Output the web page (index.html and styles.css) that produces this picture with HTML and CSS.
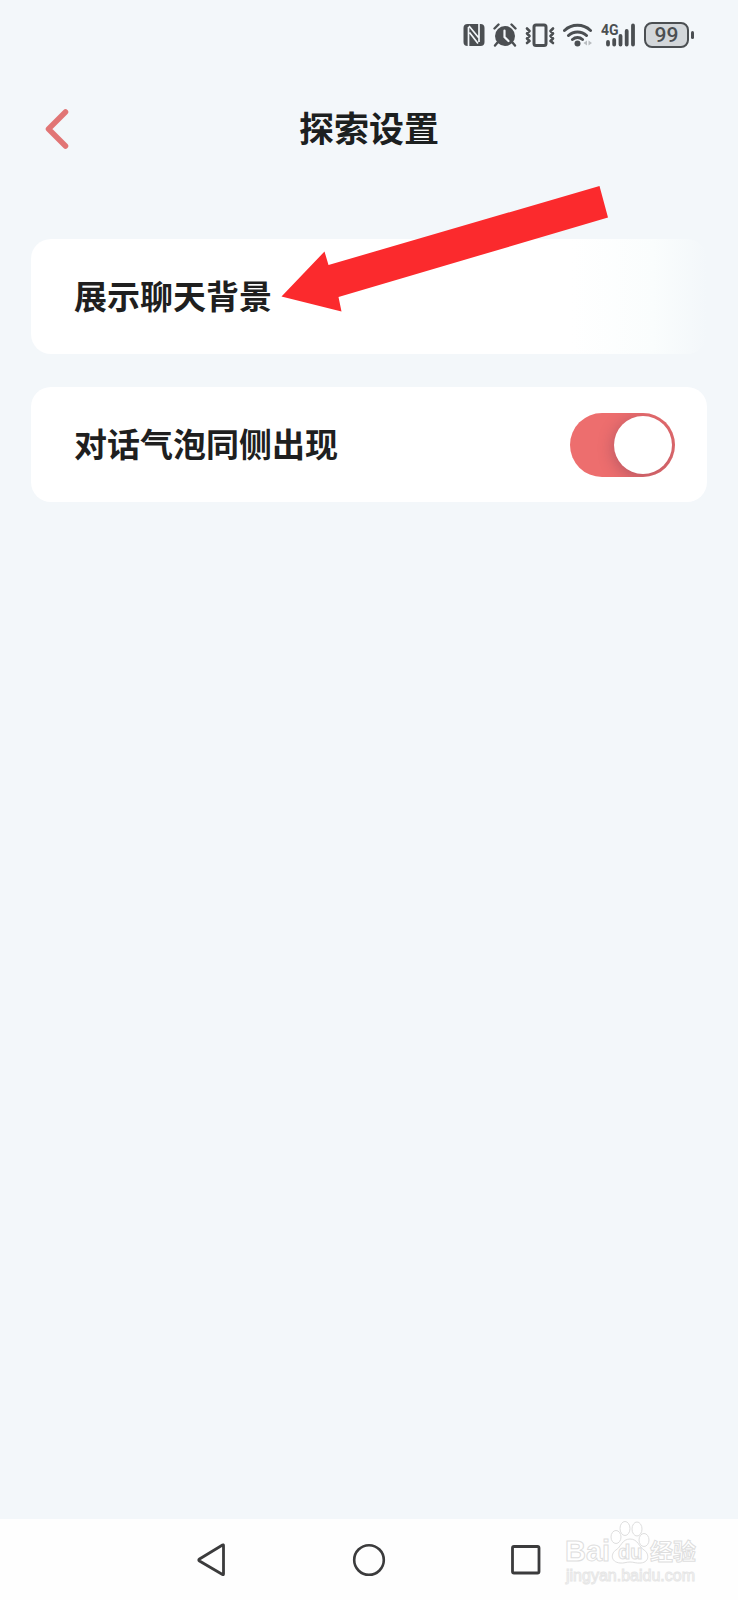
FILE: index.html
```html
<!DOCTYPE html>
<html lang="zh-CN">
<head>
<meta charset="utf-8">
<meta name="viewport" content="width=device-width, initial-scale=1">
<title>探索设置</title>
<link rel="stylesheet" href="styles.css">
</head>
<body>
<div class="status">
  <svg class="icon" width="22" height="24" viewBox="0 0 22 24" aria-hidden="true">
    <rect x="0.5" y="1" width="21" height="22" rx="4" fill="#4b4f52"/>
    <path d="M5.500 23V4M6 3l9.500 11.500M6.500 9.500l8.500 11M16 1v18" fill="none" stroke="#f3f7fa" stroke-width="1.700"/>
  </svg>
  <svg class="icon" width="24" height="24" viewBox="0 0 24 24" aria-hidden="true">
    <circle cx="12" cy="13" r="10" fill="#4b4f52"/>
    <path d="M1.500 5.500l4-4M22.500 5.500l-4-4M4.500 19.500L2 22.500M19.500 19.500l2.500 3" stroke="#4b4f52" stroke-width="2.400" stroke-linecap="round"/>
    <path d="M11.500 7.500v6.500l4 4" fill="none" stroke="#f3f7fa" stroke-width="2.200" stroke-linecap="round"/>
  </svg>
  <svg class="icon" width="30" height="24" viewBox="0 0 30 24" aria-hidden="true">
    <g fill="none" stroke="#4b4f52" stroke-linecap="round" stroke-linejoin="round">
      <rect x="9" y="2" width="12" height="20.500" rx="2" stroke-width="3"/>
      <path d="M2 5.500l2.500 2.500L2 10.500 4.500 13 2 15.500 4.500 18 2 20M28 5.500L25.500 8l2.500 2.500-2.500 2.500 2.500 2.500-2.500 2.500 2.500 2" stroke-width="2.600"/>
    </g>
  </svg>
  <svg class="icon" width="30" height="24" viewBox="0 0 30 24" aria-hidden="true">
    <g fill="none" stroke="#4b4f52" stroke-width="3" stroke-linecap="round">
      <path d="M1.500 7.500a19 19 0 0 1 26 0M5.500 12.500a13 13 0 0 1 18 0M9.500 16.500a7.500 7.500 0 0 1 10 0"/>
    </g>
    <circle cx="14.500" cy="20.500" r="3" fill="#4b4f52"/>
    <path d="M24 17.500v5L20.500 20zM25.500 17.500v5L29 20z" fill="#b9bdc0"/>
  </svg>
  <svg class="icon" width="35" height="24" viewBox="0 0 35 24" role="img" aria-label="4G">
    <text x="0" y="12" class="network">4G</text>
    <path d="M7 19v2.500M13.200 17v4.500M19.500 13v8.500M25.700 8v13.500M32 2.500v19" stroke="#4b4f52" stroke-width="3.800" stroke-linecap="round"/>
  </svg>
  <span class="battery">99</span>
</div>

<header class="header">
  <button class="back" type="button" aria-label="返回">
    <svg width="24" height="40" viewBox="0 0 24 40" aria-hidden="true"><path d="M20.500 3L3.500 20l17 17" fill="none" stroke="#e17575" stroke-width="5.500" stroke-linecap="round" stroke-linejoin="round"/></svg>
  </button>
  <h1 class="title">探索设置</h1>
</header>

<main class="list">
  <section class="row row-fade">
    <span class="name">展示聊天背景</span>
    <svg class="arrow" width="328" height="126" viewBox="0 0 328 126" aria-hidden="true"><path d="M0.500 110.500l43-45 4 13.500L318.500 0 327 31.500 57.500 111l3 14.500z" fill="#fb2a2d"/></svg>
  </section>
  <section class="row">
    <label class="name" for="same-side">对话气泡同侧出现</label>
    <input class="switch" type="checkbox" role="switch" id="same-side" checked>
  </section>
</main>

<nav class="nav">
  <button type="button" aria-label="后退"><svg width="34" height="34" viewBox="0 0 34 34" aria-hidden="true"><path d="M28.500 2.500v28.500q0 1-1 .5L4.500 18q-1.500-1 0-2L27.500 2q1-.5 1 .5z" fill="none" stroke="#3b3b3c" stroke-width="2.800"/></svg></button>
  <button type="button" aria-label="主页"><svg width="34" height="34" viewBox="0 0 34 34" aria-hidden="true"><circle cx="17" cy="17" r="14.800" fill="none" stroke="#3b3b3c" stroke-width="2.600"/></svg></button>
  <button type="button" aria-label="最近任务"><svg width="34" height="34" viewBox="0 0 34 34" aria-hidden="true"><rect x="3.500" y="3.500" width="26.500" height="26.500" rx="1.500" fill="none" stroke="#3b3b3c" stroke-width="2.800"/></svg></button>
  <svg class="watermark" width="136" height="66" viewBox="0 0 136 66" role="img" aria-label="Baidu 经验">
    <g fill="#fff" stroke="#dedede" stroke-width="1">
      <text x="1" y="40" class="mark-latin">Bai</text>
      <text x="86" y="39" class="mark-cjk">经验</text>
      <ellipse cx="52" cy="16" rx="5" ry="6.500"/>
      <ellipse cx="61" cy="7.500" rx="5" ry="7"/>
      <ellipse cx="73" cy="8" rx="5" ry="7"/>
      <ellipse cx="80" cy="19" rx="5" ry="6.500"/>
      <path d="M66 18c-8 0-9 8-14 11s-6 12 4 13c4 .5 6-1 10-1s6 1.500 11 1c9-1 8-10 3-13s-6-11-14-11z"/>
      <text x="54" y="38" class="mark-du">du</text>
      <text x="2" y="60" class="mark-url">jingyan.baidu.com</text>
    </g>
  </svg>
</nav>
</body>
</html>
```
FILE: styles.css
```css
* {
  box-sizing: border-box;
}

body {
  margin: 0;
  min-height: 100vh;
  display: flex;
  flex-direction: column;
  background: #f3f7fa;
  color: #1f1f1f;
  font-family: "Noto Sans CJK SC", "Noto Sans", sans-serif;
}

button {
  padding: 0;
  border: 0;
  background: none;
  cursor: pointer;
}

svg {
  display: block;
}

.status {
  display: flex;
  align-items: center;
  justify-content: flex-end;
  gap: 8px;
  height: 70px;
  padding-right: 49px;
}

.network {
  font: 700 14px Roboto, sans-serif;
  fill: #4b4f52;
}

.battery {
  position: relative;
  width: 45px;
  height: 26px;
  border: 2px solid #4b4f52;
  border-radius: 8px;
  background: #d3d7da;
  color: #4b4f52;
  font: 500 21px/22px Roboto, sans-serif;
  text-align: center;
}

.battery::after {
  content: "";
  position: absolute;
  top: 7px;
  right: -7px;
  width: 3px;
  height: 8px;
  border-radius: 2px;
  background: #4b4f52;
}

.header {
  display: grid;
  grid-template-columns: 1fr auto 1fr;
  align-items: center;
  height: 117px;
  padding: 0 45px;
}

.back {
  justify-self: start;
}

.title {
  margin: 0;
  padding-bottom: 4px;
  color: #1c2020;
  font-size: 35px;
  line-height: 50px;
  font-weight: 700;
}

.list {
  flex: 1;
  display: flex;
  flex-direction: column;
  gap: 33px;
  padding: 52px 31px;
}

.row {
  position: relative;
  display: flex;
  align-items: center;
  justify-content: space-between;
  min-height: 115px;
  padding: 0 32px 0 43px;
  border-radius: 20px;
  background: #fff;
  font-size: 33px;
  line-height: 48px;
  font-weight: 700;
}

.row-fade {
  background: linear-gradient(to right, #fff 80%, #fafdfd 92%, #f3f7fa);
}

.name {
  padding-bottom: 3px;
}

.arrow {
  position: absolute;
  left: 250px;
  top: -53px;
}

.switch {
  appearance: none;
  display: flex;
  justify-content: flex-end;
  width: 105px;
  height: 64px;
  margin: 0;
  padding: 3px;
  border-radius: 32px;
  background: #ed6e6e;
  overflow: hidden;
}

.switch::before {
  content: "";
  width: 58px;
  height: 58px;
  border-radius: 50%;
  background: #fff;
  box-shadow: 0 3px 16px 0 rgba(90, 50, 80, 0.4);
}

.switch:not(:checked) {
  justify-content: flex-start;
  background: #d3d7da;
}

.nav {
  position: relative;
  display: grid;
  grid-template-columns: repeat(3, 1fr);
  place-items: center;
  height: 81px;
  padding: 0 18%;
  background: #fefefe;
}

.watermark {
  position: absolute;
  right: 38px;
  top: 2px;
}

.mark-latin {
  font: 700 29px "Liberation Sans", sans-serif;
}

.mark-du {
  font: 700 20px "Liberation Sans", sans-serif;
}

.mark-cjk {
  font: 700 23px "Noto Sans CJK SC", sans-serif;
}

.mark-url {
  font: 400 16px "Liberation Sans", sans-serif;
  stroke: #e6e6e6;
}
```
